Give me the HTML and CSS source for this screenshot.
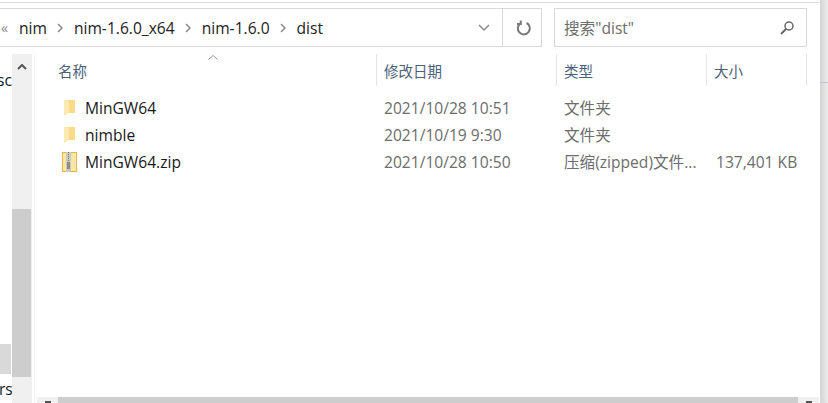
FILE: index.html
```html
<!DOCTYPE html>
<html lang="zh">
  <head>
    <meta charset="UTF-8" />
    <title>dist</title>
    <link rel="stylesheet" href="styles.css">
  </head>
  <body>
    <div class="page">
      <div class="window">
        <div class="toolbar">
          <div class="address">
            <span class="more">«</span>
            <span class="crumb">nim</span>
            <svg class="sep" viewBox="0 0 6 10"><path d="M1 1l4 4-4 4" /></svg>
            <span class="crumb">nim-1.6.0_x64</span>
            <svg class="sep" viewBox="0 0 6 10"><path d="M1 1l4 4-4 4" /></svg>
            <span class="crumb">nim-1.6.0</span>
            <svg class="sep" viewBox="0 0 6 10"><path d="M1 1l4 4-4 4" /></svg>
            <span class="crumb">dist</span>
            <svg class="chevron" viewBox="0 0 12 8"><path d="M1 1l5 5 5-5" /></svg>
          </div>
          <div class="refresh">
            <svg viewBox="0 0 16 16"><path d="M10.500 3A6 6 0 1 1 4.500 3.400" /><path d="M4.800 0.500v3.500H1" /></svg>
          </div>
          <div class="search">
            <span>搜索"dist"</span>
            <svg viewBox="0 0 16 16"><circle cx="10" cy="6" r="4" /><path class="handle" d="M7 9l-5 5" /></svg>
          </div>
        </div>

        <div class="main">
          <div class="nav">
            <div class="nav-labels">
              <div class="nav-top">sc</div>
              <div class="nav-selected"></div>
              <div class="nav-bottom">rs</div>
            </div>
            <div class="nav-scroll">
              <svg viewBox="0 0 10 6"><path d="M1 5l4-4 4 4" /></svg>
              <div class="nav-thumb"></div>
            </div>
          </div>

          <div class="files">
            <svg class="sort" viewBox="0 0 10 5"><path d="M0.500 4.500L5 0.500l4.500 4" /></svg>
            <div class="head">
              <div class="col col-name">名称</div>
              <div class="col col-date">修改日期</div>
              <div class="col col-type">类型</div>
              <div class="col col-size">大小</div>
            </div>

            <div class="row">
              <div class="cell-name">
                <svg class="icon" viewBox="0 0 16 18"><path class="back" d="M3 1h11v13H5l-2 3z" /><path class="front" d="M3 1h3.500l1.500 2v10.500L4 16.500l-1 .5z" /></svg>
                MinGW64
              </div>
              <div class="cell cell-date">2021/10/28 10:51</div>
              <div class="cell cell-type">文件夹</div>
              <div class="cell cell-size"></div>
            </div>
            <div class="row">
              <div class="cell-name">
                <svg class="icon" viewBox="0 0 16 18"><path class="back" d="M3 1h11v13H5l-2 3z" /><path class="front" d="M3 1h3.500l1.500 2v10.500L4 16.500l-1 .5z" /></svg>
                nimble
              </div>
              <div class="cell cell-date">2021/10/19 9:30</div>
              <div class="cell cell-type">文件夹</div>
              <div class="cell cell-size"></div>
            </div>
            <div class="row">
              <div class="cell-name">
                <svg class="icon" viewBox="0 0 16 18"><rect class="zip" x="1.500" y="-0.500" width="14" height="19" /><rect class="zip-band" x="5" y="-1" width="5" height="20" /><path class="zip-teeth" d="M7.500 -1v11" /><rect class="zip-pull" x="6" y="9" width="3" height="7" /></svg>
                MinGW64.zip
              </div>
              <div class="cell cell-date">2021/10/28 10:50</div>
              <div class="cell cell-type">压缩(zipped)文件...</div>
              <div class="cell cell-size">137,401 KB</div>
            </div>

            <div class="hscroll">
              <div class="hscroll-btn"><span class="arrow"></span></div>
              <div class="hscroll-thumb"></div>
              <div class="hscroll-btn"><span class="arrow"></span></div>
            </div>
          </div>
        </div>
      </div>
      <div class="edge"></div>
    </div>
  </body>
</html>
```

FILE: styles.css
```css
* {
  box-sizing: border-box;
}

html,
body {
  margin: 0;
  height: 100%;
  overflow: hidden;
  background-color: #fff;
}

body {
  font-family: "Open Sans", "Noto Sans", "Noto Sans CJK SC", sans-serif;
  font-size: 15.6px;
  color: #1a1a1a;
}

.page {
  display: flex;
  height: 403px;
}

.window {
  display: flex;
  flex-direction: column;
  width: 820px;
  flex: none;
}

.edge {
  flex: 1;
  background: linear-gradient(to bottom, transparent 82px, #c4c8ce 82px, #c4c8ce 83px, transparent 83px),
    linear-gradient(to right, #d4d4d4, #ececec);
}

/* top bar */
.toolbar {
  display: flex;
  height: 54px;
  padding-top: 5px;
  border-top: 3px solid #fff;
  position: relative;
}

.toolbar::before {
  content: "";
  position: absolute;
  left: 0;
  right: 1px;
  top: -1px;
  border-top: 1px solid #dcdcdc;
}

.address {
  display: flex;
  align-items: center;
  width: 503px;
  height: 39px;
  padding-left: 1px;
  border: 1px solid #d9d9d9;
  border-left: none;
}

.more {
  width: 18px;
  color: #8a8a8a;
  font-size: 14px;
}

.crumb {
  white-space: nowrap;
  color: #222;
}

.sep {
  width: 6px;
  height: 10px;
  margin: 0 10.5px;
}

.sep path,
.chevron path {
  fill: none;
  stroke: #8a8a8a;
  stroke-width: 1.5;
}

.chevron {
  width: 12px;
  height: 8px;
  margin-left: auto;
  margin-right: 12px;
}

.refresh {
  display: flex;
  align-items: center;
  justify-content: center;
  width: 39px;
  height: 39px;
  padding-left: 3px;
  border: 1px solid #d9d9d9;
  border-left: none;
}

.refresh svg {
  width: 16px;
  height: 16px;
}

.refresh path {
  fill: none;
  stroke: #7a7a7a;
  stroke-width: 2;
}

.search {
  display: flex;
  align-items: center;
  justify-content: space-between;
  width: 253px;
  height: 39px;
  margin-left: 12px;
  padding: 0 11px 0 9px;
  border: 1px solid #d9d9d9;
  color: #6d6d6d;
}

.search svg {
  width: 16px;
  height: 16px;
}

.search circle {
  fill: none;
  stroke: #666;
  stroke-width: 1.5;
}

.search .handle {
  stroke: #666;
  stroke-width: 2;
}

/* body */
.main {
  display: flex;
  flex: 1;
  min-height: 0;
}

.nav {
  display: flex;
  width: 35px;
  flex: none;
  border-right: 1px solid #f3f3f3;
}

.nav-labels {
  width: 12px;
  flex: none;
  position: relative;
  overflow: hidden;
  color: #0c1c30;
}

.nav-top {
  position: absolute;
  left: -3px;
  top: 15px;
}

.nav-selected {
  position: absolute;
  left: 0;
  top: 290px;
  width: 11px;
  height: 30px;
  background-color: #d9d9d9;
}

.nav-bottom {
  position: absolute;
  left: -1px;
  top: 324px;
}

.nav-scroll {
  width: 20px;
  background-color: #f0f0f0;
}

.nav-scroll svg {
  display: block;
  width: 10px;
  height: 6px;
  margin: 10px auto 0;
}

.nav-scroll path {
  fill: none;
  stroke: #555;
  stroke-width: 2;
}

.nav-thumb {
  width: 19px;
  height: 168px;
  margin-top: 139px;
  background-color: #cdcdcd;
}

.files {
  flex: 1;
  min-width: 0;
  position: relative;
  display: flex;
  flex-direction: column;
}

.sort {
  position: absolute;
  left: 173px;
  top: 1px;
  width: 10px;
  height: 5px;
}

.sort path {
  fill: none;
  stroke: #999;
}

.head {
  display: flex;
  height: 32px;
  margin-bottom: 8px;
}

.col {
  display: flex;
  align-items: center;
  border-right: 1px solid #e5e5e5;
  color: #4c607a;
  font-size: 14.5px;
}

.col-name {
  width: 342px;
  padding-left: 23px;
}

.col-date {
  width: 180px;
  padding-left: 7px;
}

.col-type {
  width: 150px;
  padding-left: 7px;
}

.col-size {
  width: 100px;
  padding-left: 7px;
}

.row {
  display: flex;
  align-items: center;
  height: 27px;
  color: #6d6d6d;
}

.cell-name {
  display: flex;
  align-items: center;
  gap: 8px;
  width: 342px;
  padding-left: 26px;
  color: #1a1a1a;
}

.icon {
  width: 16px;
  height: 18px;
  overflow: visible;
}

.back {
  fill: #f9dc88;
}

.front {
  fill: #fdeab2;
}

.zip {
  fill: #fbe6a5;
  stroke: #e3bb44;
}

.zip-band {
  fill: #c9c9c0;
}

.zip-teeth {
  stroke: #77776f;
  stroke-dasharray: 1 1;
}

.zip-pull {
  fill: #8d8d85;
}

.cell-date {
  width: 180px;
  padding-left: 7px;
}

.cell-type {
  width: 150px;
  padding-left: 7px;
  white-space: nowrap;
}

.cell-size {
  width: 100px;
  padding-left: 9px;
}

.hscroll {
  position: absolute;
  left: 2px;
  right: 1px;
  bottom: 0;
  height: 6px;
  display: flex;
}

.hscroll-btn {
  width: 21px;
  background-color: #f0f0f0;
  position: relative;
}

.hscroll-thumb {
  flex: 1;
  background-color: #cdcdcd;
}

.arrow {
  position: absolute;
  left: 8px;
  top: 4px;
  width: 6px;
  height: 2px;
  background-color: #555;
}
```
